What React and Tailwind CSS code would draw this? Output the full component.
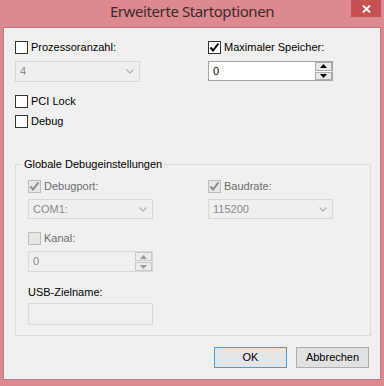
function CheckMark({ color }) {
  return (
    <svg width="11" height="11" viewBox="0 0 11 11">
      <path d="M1.5 5.5 L4 8.5 L9.5 1.5" fill="none" stroke={color} strokeWidth="2" />
    </svg>
  );
}

function Check({ checked, disabled, label }) {
  return (
    <div className="flex items-center h-[13px] gap-[3px]">
      <span
        className={
          disabled
            ? "w-[13px] h-[13px] border border-[#bcbcbc] bg-[#e6e6e6] flex items-center justify-center"
            : "w-[13px] h-[13px] border border-[#333333] bg-white flex items-center justify-center"
        }
      >
        {checked && <CheckMark color={disabled ? "#8a8a8a" : "#000"} />}
      </span>
      <span className={disabled ? "text-[#6d6d6d] leading-[13px]" : "text-black leading-[13px]"}>{label}</span>
    </div>
  );
}

function Select({ value, h = "h-[20px]" }) {
  return (
    <div className={`w-[125px] ${h} border border-[#d9d9d9] bg-[#efefef] flex items-center justify-between pl-[4px] pr-[5px]`}>
      <span className="text-[#8a8a8a]">{value}</span>
      <svg width="8" height="5" viewBox="0 0 8 5">
        <path d="M0.5 0.5 L4 4 L7.5 0.5" fill="none" stroke="#b5b5b5" strokeWidth="1.3" />
      </svg>
    </div>
  );
}

function Arrow({ up, color }) {
  return (
    <svg width="7" height="4" viewBox="0 0 7 4">
      <path d={up ? "M0 4 L3.5 0 L7 4 Z" : "M0 0 L7 0 L3.5 4 Z"} fill={color} />
    </svg>
  );
}

function Spin({ value, disabled, h }) {
  return (
    <div
      className={
        disabled
          ? `w-[125px] ${h} border border-[#d9d9d9] bg-[#f0f0f0] flex`
          : `w-[125px] ${h} border border-[#a5a5a5] bg-white flex`
      }
    >
      <div className={disabled ? "flex-1 flex items-center pl-[4px] text-[#8a8a8a]" : "flex-1 flex items-center pl-[4px] text-black"}>
        {value}
      </div>
      <div className="w-[17px] flex flex-col gap-px">
        <div className={disabled ? "flex-1 border border-[#c8c8c8] bg-[#ececec] flex items-center justify-center" : "flex-1 border border-[#acacac] bg-[#e9e9e9] flex items-center justify-center"}>
          <Arrow up color={disabled ? "#9a9a9a" : "#000"} />
        </div>
        <div className={disabled ? "flex-1 border border-[#c8c8c8] bg-[#ececec] flex items-center justify-center" : "flex-1 border border-[#acacac] bg-[#e9e9e9] flex items-center justify-center"}>
          <Arrow color={disabled ? "#9a9a9a" : "#000"} />
        </div>
      </div>
    </div>
  );
}

export default function App() {
  return (
    <div className="w-[384px] h-[386px] bg-[#dd8990] flex flex-col font-['Liberation_Sans',Arial,sans-serif] text-[11px] leading-[13px]">
      {/* Title bar */}
      <div className="h-[27px] relative flex justify-center">
        <span className="mt-[2px] text-[15px] leading-[18px] tracking-[-0.4px] text-[#3b2b2e] font-['Noto_Sans',sans-serif]">
          Erweiterte Startoptionen
        </span>
        <div className="absolute right-[3px] top-0 w-[30px] h-[17px] bg-[#c75050] flex items-center justify-center">
          <svg width="9" height="8" viewBox="0 0 9 8">
            <path d="M1 0.5 L8 7.5 M8 0.5 L1 7.5" stroke="#fff" strokeWidth="1.8" />
          </svg>
        </div>
      </div>

      {/* Client area */}
      <div className="ml-[3px] w-[378px] h-[353px] bg-[#f0f0f0] border border-[#c7777f] pl-[11px] pt-[13px] flex flex-col">
        <div className="flex">
          <div className="w-[193px] flex flex-col">
            <Check label="Prozessoranzahl:" />
            <div className="mt-[7px]">
              <Select value="4" h="h-[21px]" />
            </div>
            <div className="mt-[13px]">
              <Check label="PCI Lock" />
            </div>
            <div className="mt-[7px]">
              <Check label="Debug" />
            </div>
          </div>
          <div className="flex flex-col">
            <Check checked label="Maximaler Speicher:" />
            <div className="mt-[7px]">
              <Spin value="0" h="h-[20px]" />
            </div>
          </div>
        </div>

        {/* Group box */}
        <div className="mt-[36px] w-[356px] h-[172px] border border-[#dcdcdc] relative pl-[12px] pt-[15px] flex">
          <span className="absolute left-[6px] -top-[7px] bg-[#f0f0f0] px-[2px] text-black">
            Globale Debugeinstellungen
          </span>
          <div className="w-[180px] flex flex-col">
            <Check checked disabled label="Debugport:" />
            <div className="mt-[6px]">
              <Select value="COM1:" />
            </div>
            <div className="mt-[13px]">
              <Check disabled label="Kanal:" />
            </div>
            <div className="mt-[6px]">
              <Spin disabled value="0" h="h-[21px]" />
            </div>
            <div className="mt-[14px] text-black">USB-Zielname:</div>
            <div className="mt-[4px] w-[125px] h-[22px] border border-[#d9d9d9] bg-[#f0f0f0]" />
          </div>
          <div className="flex flex-col">
            <Check checked disabled label="Baudrate:" />
            <div className="mt-[6px]">
              <Select value="115200" />
            </div>
          </div>
        </div>

        {/* Buttons */}
        <div className="mt-[11px] pr-[11px] flex justify-end gap-[9px]">
          <button className="w-[73px] h-[21px] border border-[#3c9ef5] bg-[#e5e5e5] text-black">OK</button>
          <button className="w-[73px] h-[21px] border border-[#adadad] bg-[#e1e1e1] text-black">Abbrechen</button>
        </div>
      </div>
    </div>
  );
}
